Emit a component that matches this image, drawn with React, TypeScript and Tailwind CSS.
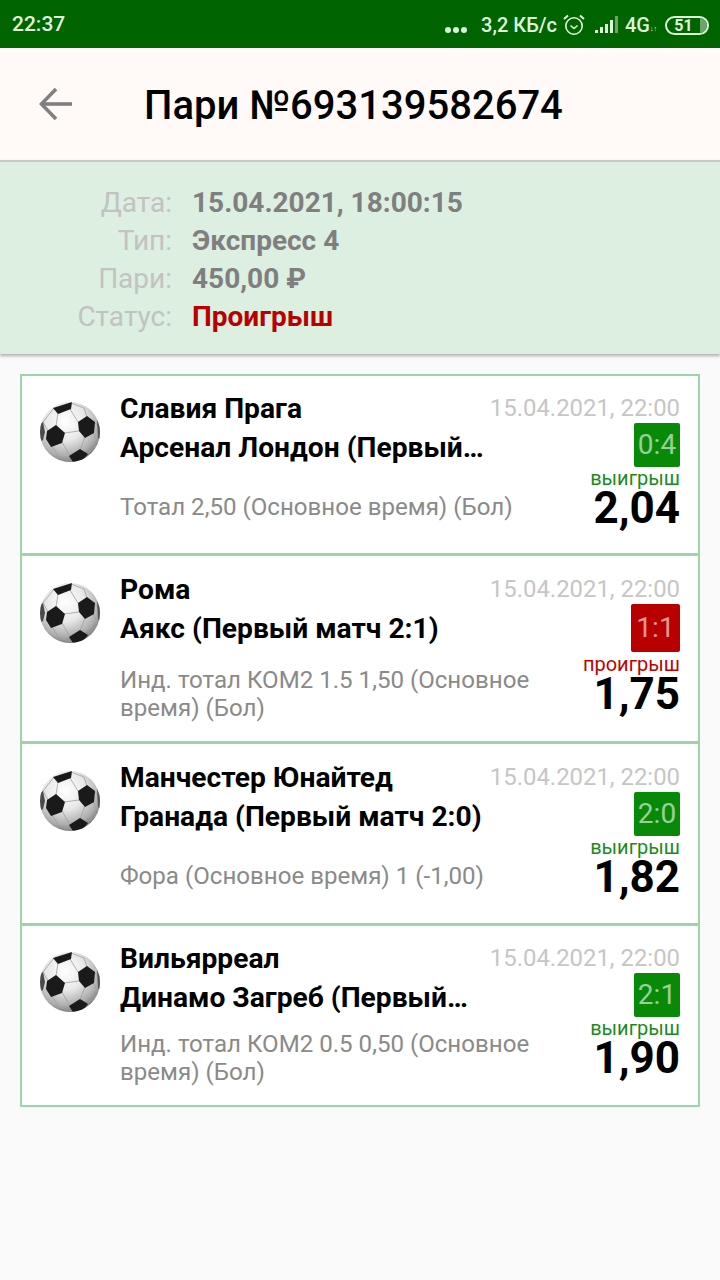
import React from 'react';

type Bet = {
  home: string;
  away: string;
  market: string;
  date: string;
  score: string;
  won: boolean;
  odds: string;
  rowClass: string;
  marketClass: string;
};

const bets: Bet[] = [
  {
    home: 'Славия Прага',
    away: 'Арсенал Лондон (Первый…',
    market: 'Тотал 2,50 (Основное время) (Бол)',
    date: '15.04.2021, 22:00',
    score: '0:4',
    won: true,
    odds: '2,04',
    rowClass: 'h-[177px] pt-[13px]',
    marketClass: 'mt-[26px]',
  },
  {
    home: 'Рома',
    away: 'Аякс (Первый матч 2:1)',
    market: 'Инд. тотал КОМ2 1.5 1,50 (Основное время) (Бол)',
    date: '15.04.2021, 22:00',
    score: '1:1',
    won: false,
    odds: '1,75',
    rowClass: 'h-[188px] pt-[14px] border-t-[3px] border-[#9cd6a8]',
    marketClass: 'mt-[18px]',
  },
  {
    home: 'Манчестер Юнайтед',
    away: 'Гранада (Первый матч 2:0)',
    market: 'Фора (Основное время) 1 (-1,00)',
    date: '15.04.2021, 22:00',
    score: '2:0',
    won: true,
    odds: '1,82',
    rowClass: 'h-[182px] pt-[14px] border-t-[3px] border-[#9cd6a8]',
    marketClass: 'mt-[26px]',
  },
  {
    home: 'Вильярреал',
    away: 'Динамо Загреб (Первый…',
    market: 'Инд. тотал КОМ2 0.5 0,50 (Основное время) (Бол)',
    date: '15.04.2021, 22:00',
    score: '2:1',
    won: true,
    odds: '1,90',
    rowClass: 'h-[182px] pt-[13px] border-t-[3px] border-[#9cd6a8]',
    marketClass: 'mt-[13px]',
  },
];

const summary = [
  { label: 'Дата:', value: '15.04.2021, 18:00:15', valueClass: 'text-[#7f7f7f]' },
  { label: 'Тип:', value: 'Экспресс 4', valueClass: 'text-[#7f7f7f]' },
  { label: 'Пари:', value: '450,00 ₽', valueClass: 'text-[#7f7f7f]' },
  { label: 'Статус:', value: 'Проигрыш', valueClass: 'text-[#b80000]' },
];

const Ball = ({ id }: { id: number }) => (
  <svg width="60" height="60" viewBox="0 0 60 60" className="shrink-0 blur-[0.5px]">
    <defs>
      <radialGradient id={`ballBase${id}`} cx="42%" cy="32%" r="72%">
        <stop offset="0%" stopColor="#ffffff" />
        <stop offset="45%" stopColor="#e8e8e8" />
        <stop offset="80%" stopColor="#acacac" />
        <stop offset="100%" stopColor="#6e6e6e" />
      </radialGradient>
      <clipPath id={`ballClip${id}`}>
        <circle cx="30" cy="30" r="30" />
      </clipPath>
    </defs>
    <circle cx="30" cy="30" r="30" fill={`url(#ballBase${id})`} />
    <g clipPath={`url(#ballClip${id})`}>
      <path
        d="M18 11 L16 24 M30 7 L38 20 M16 24 L24 31 L39 29 M22 40 L30 54 M45 35 L40 48 M12 44 L19 55 L33 59 M8 29 L3 20 L14 6 M31 1 L44 6 L47 15 M54 20 L60 26 M53 30 L58 42 L47 52"
        stroke="#a0a0a0"
        strokeWidth="0.8"
        fill="none"
      />
      <polygon points="13,6 32,0 31,7 18,12" fill="#1a1a1a" />
      <polygon points="38,20 47,14 55,20 54,31 45,36 39,29" fill="#1a1a1a" />
      <polygon points="7,29 16,23 25,31 22,41 11,45 6,37" fill="#1a1a1a" />
      <polygon points="29,54 40,47 48,52 43,58 33,60" fill="#1a1a1a" />
      <polygon points="0,22 3,20 5,30 3,38 0,40" fill="#4a4a4a" />
      <polygon points="57,18 60,24 60,38 58,36" fill="#555555" />
    </g>
  </svg>
);

const AlarmIcon = () => (
  <svg width="24" height="24" viewBox="0 0 24 24" fill="none" stroke="#dff3dc" strokeWidth="1.6">
    <circle cx="12" cy="13" r="8.2" />
    <path d="M8.5 12.5 L12 15.5 L15.5 12.5" />
    <path d="M2 6 L6 2.5 M22 6 L18 2.5" strokeWidth="2" />
  </svg>
);

const SignalIcon = () => (
  <svg width="26" height="20" viewBox="0 0 26 20" fill="#dff3dc">
    <rect x="0" y="15" width="3" height="3" />
    <rect x="5" y="12" width="3" height="6" />
    <rect x="10" y="9" width="3" height="9" />
    <rect x="15" y="5" width="3" height="13" />
    <rect x="20" y="1" width="3" height="17" fill="#6da66d" />
  </svg>
);

const BackArrow = () => (
  <svg width="34" height="34" viewBox="0 0 34 34" fill="none" stroke="#808080" strokeWidth="3.6">
    <path d="M33 17 H3" />
    <path d="M17 2 L2.5 17 L17 32" />
  </svg>
);

const BetRow = ({ bet, index }: { bet: Bet; index: number }) => (
  <div className={`flex px-[18px] ${bet.rowClass}`}>
    <div className="mt-[13px] w-[80px] shrink-0">
      <Ball id={index} />
    </div>
    <div className="w-[412px] shrink-0">
      <div className="whitespace-nowrap text-[28.2px] leading-[39px] font-bold text-black">{bet.home}</div>
      <div className="whitespace-nowrap text-[28.2px] leading-[39px] font-bold text-black">{bet.away}</div>
      <div className={`text-[24.1px] leading-[28px] text-[#8a8a8a] ${bet.marketClass}`}>{bet.market}</div>
    </div>
    <div className="flex min-w-0 flex-1 flex-col items-end pt-[5px]">
      <div className="whitespace-nowrap text-[23.9px] leading-[28px] text-[#c6c6c6]">{bet.date}</div>
      <div
        className={`mt-[1px] flex items-center justify-center rounded-[2px] text-[28px] text-white/60 ${
          bet.won ? 'h-[44px] w-[46px] bg-[#088a08]' : 'h-[48px] w-[49px] bg-[#b90000]'
        }`}
      >
        {bet.score}
      </div>
      <div
        className={`whitespace-nowrap text-[20px] leading-[18px] ${
          bet.won ? 'mt-[2px] text-[#1c8a1c]' : 'mt-[3px] text-[#c00000]'
        }`}
      >
        {bet.won ? 'выигрыш' : 'проигрыш'}
      </div>
      <div className="mt-[1px] text-[44px] leading-[40px] font-bold text-black">{bet.odds}</div>
    </div>
  </div>
);

export default function App() {
  return (
    <div className="flex min-h-[1280px] flex-col bg-[#fafafa] font-['Roboto',sans-serif]">
      {/* Status bar */}
      <div className="flex h-[48px] items-center justify-between bg-[#006400] pl-[12px] pr-[11px] pt-[2px] text-[#dff3dc]">
        <span className="text-[21px] font-medium">22:37</span>
        <div className="flex items-center">
          <div className="mt-[10px] flex gap-[2px]">
            <span className="h-[6px] w-[6px] rounded-full bg-[#dff3dc]" />
            <span className="h-[6px] w-[6px] rounded-full bg-[#dff3dc]" />
            <span className="h-[6px] w-[6px] rounded-full bg-[#dff3dc]" />
          </div>
          <span className="ml-[14px] text-[20px] font-medium">3,2 КБ/с</span>
          <span className="ml-[5px] flex"><AlarmIcon /></span>
          <span className="ml-[9px] flex"><SignalIcon /></span>
          <span className="ml-[4px] text-[20px] font-medium">4G</span>
          <span className="mt-[8px] w-[10px] text-[7px]">↓↑</span>
          <div className="ml-[5px] flex h-[19px] w-[44px] items-center overflow-hidden rounded-full border-2 border-[#dff3dc]">
            <span className="w-[33px] text-center text-[16px] leading-[15px] font-bold">51</span>
            <span className="h-full flex-1 bg-[#6da66d]" />
          </div>
        </div>
      </div>

      {/* Header */}
      <div className="flex h-[112px] items-center bg-[#fffaf7]">
        <div className="ml-[39px] flex w-[105px]">
          <BackArrow />
        </div>
        <h1 className="mt-[3px] text-[40px] font-medium text-black">Пари №693139582674</h1>
      </div>

      {/* Summary */}
      <div className="h-[194px] border-t-2 border-[#c8c8c8] bg-[#dcefe0] pt-[22px] shadow-[0_2px_3px_rgba(0,0,0,0.3)]">
        {summary.map((row) => (
          <div key={row.label} className="flex text-[28px] leading-[38px]">
            <span className="w-[172px] text-right text-[#c2c2c2]">{row.label}</span>
            <span className={`ml-[20px] font-bold ${row.valueClass}`}>{row.value}</span>
          </div>
        ))}
      </div>

      {/* Bets */}
      <div className="mx-[20px] mt-[20px] border-2 border-[#9cd6a8] bg-white">
        {bets.map((bet, i) => (
          <BetRow key={bet.home} bet={bet} index={i} />
        ))}
      </div>
    </div>
  );
}
